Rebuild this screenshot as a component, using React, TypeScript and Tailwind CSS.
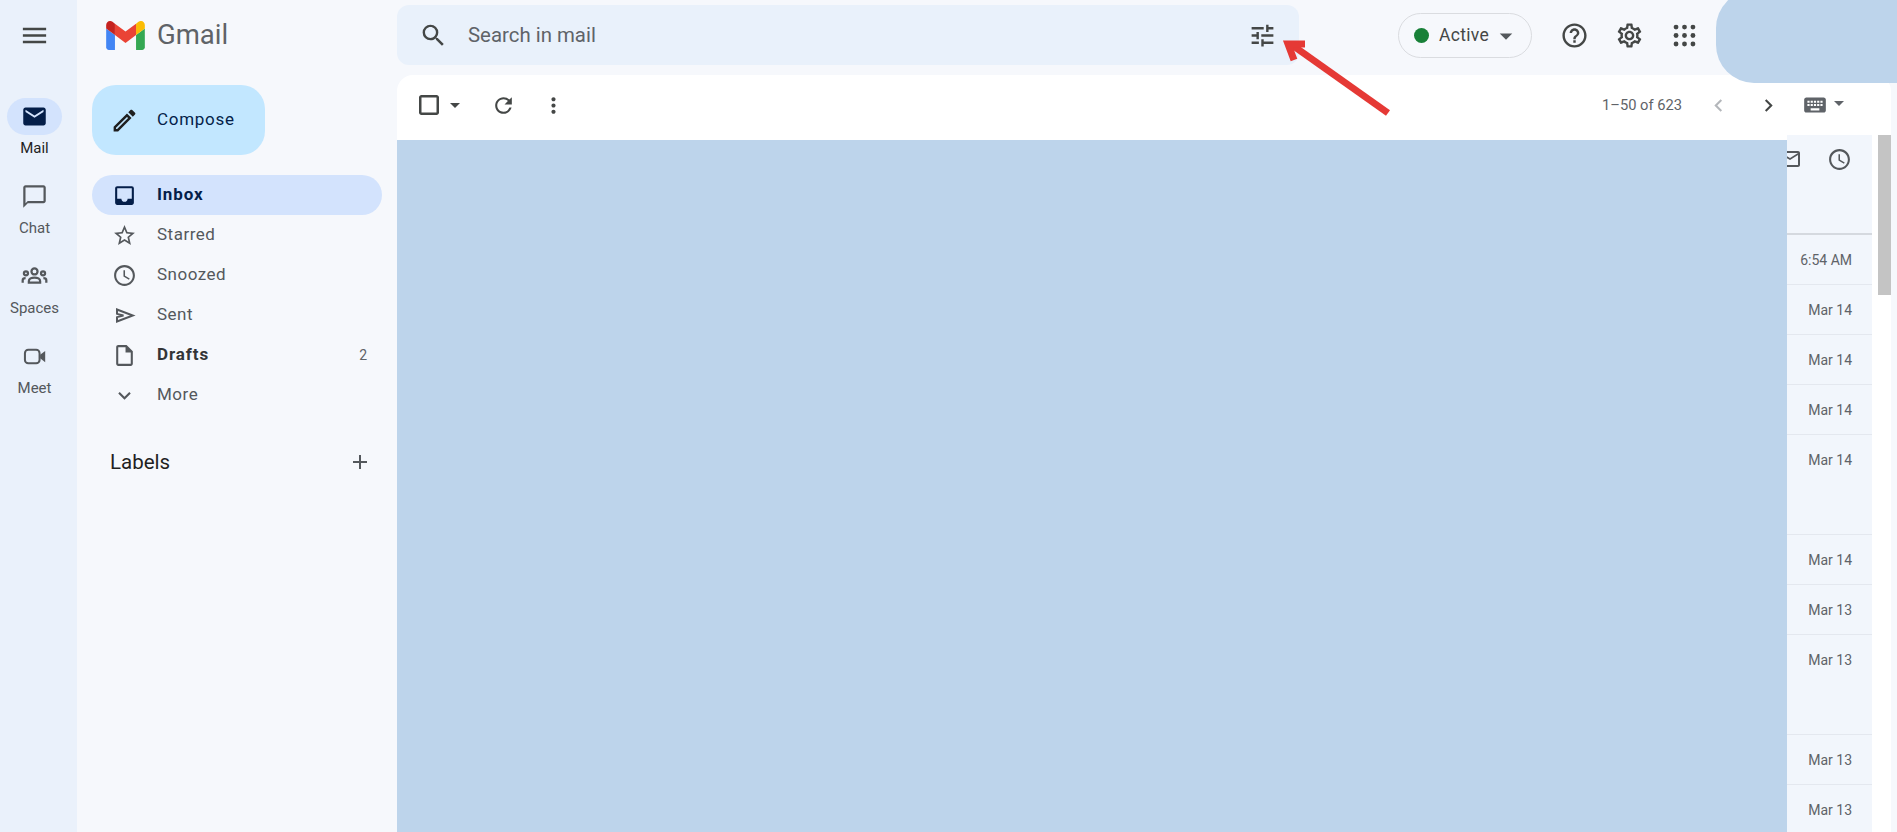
import type { ComponentType, ReactNode } from "react";
import {
  MdAccessTime,
  MdAdd,
  MdArrowDropDown,
  MdChatBubbleOutline,
  MdChevronLeft,
  MdChevronRight,
  MdCropSquare,
  MdExpandMore,
  MdInbox,
  MdKeyboard,
  MdMail,
  MdMenu,
  MdMoreVert,
  MdOutlineEdit,
  MdOutlineHelpOutline,
  MdOutlineInsertDriveFile,
  MdOutlineMailOutline,
  MdOutlineSettings,
  MdOutlineStarBorder,
  MdRefresh,
  MdSearch,
  MdTune,
} from "react-icons/md";

type Icon = ComponentType<{ className?: string }>;

function SpacesIcon({ className }: { className?: string }) {
  return (
    <svg viewBox="0 0 24 24" className={className} fill="none" stroke="currentColor" strokeWidth="2">
      <circle cx="12" cy="7.5" r="2.7" />
      <circle cx="4.4" cy="9.2" r="1.8" />
      <circle cx="19.6" cy="9.2" r="1.8" />
      <path d="M7 17.5v-1.6c0-1.7 2.2-3 5-3s5 1.3 5 3v1.6z" />
      <path d="M1.5 17.5v-2.2c0-1 1-1.8 2.6-1.8M22.5 17.5v-2.2c0-1-1-1.8-2.6-1.8" />
    </svg>
  );
}

function MeetIcon({ className }: { className?: string }) {
  return (
    <svg viewBox="0 0 24 24" className={className}>
      <rect x="3.5" y="6" width="13" height="12" rx="3" fill="none" stroke="currentColor" strokeWidth="1.8" />
      <path d="M17 10.5 21.5 7v10L17 13.5z" fill="currentColor" />
    </svg>
  );
}

function SentIcon({ className }: { className?: string }) {
  return (
    <svg viewBox="0 0 24 24" className={className} fill="none" stroke="currentColor" strokeWidth="1.9">
      <path d="M4.8 6.2 20 12 4.8 17.8v-4.2L11 12l-6.2-1.6z" />
    </svg>
  );
}

const railItems: { label: string; icon: Icon; active?: boolean }[] = [
  { label: "Mail", icon: MdMail, active: true },
  { label: "Chat", icon: MdChatBubbleOutline },
  { label: "Spaces", icon: SpacesIcon },
  { label: "Meet", icon: MeetIcon },
];

const navItems: { label: string; icon: Icon; active?: boolean; bold?: boolean; count?: string }[] = [
  { label: "Inbox", icon: MdInbox, active: true, bold: true },
  { label: "Starred", icon: MdOutlineStarBorder },
  { label: "Snoozed", icon: MdAccessTime },
  { label: "Sent", icon: SentIcon },
  { label: "Drafts", icon: MdOutlineInsertDriveFile, bold: true, count: "2" },
  { label: "More", icon: MdExpandMore },
];

// row heights follow the mail list behind the redaction: some rows carry a chip line
const dates: { text: string; tall?: boolean }[] = [
  { text: "6:54 AM" },
  { text: "Mar 14" },
  { text: "Mar 14" },
  { text: "Mar 14" },
  { text: "Mar 14", tall: true },
  { text: "Mar 14" },
  { text: "Mar 13" },
  { text: "Mar 13", tall: true },
  { text: "Mar 13" },
  { text: "Mar 13" },
];

function GmailLogo() {
  return (
    <svg viewBox="52 42 88 66" className="h-[29px] w-[39px]">
      <path fill="#4285f4" d="M58 108h14V74L52 59v43c0 3.32 2.69 6 6 6" />
      <path fill="#34a853" d="M120 108h14c3.32 0 6-2.69 6-6V59l-20 15" />
      <path fill="#fbbc04" d="M120 48v26l20-15v-8c0-7.42-8.47-11.65-14.4-7.2" />
      <path fill="#ea4335" d="M72 74V48l24 18 24-18v26L96 92" />
      <path fill="#c5221f" d="M52 51v8l20 15V48l-5.6-4.2c-5.94-4.45-14.4-.22-14.4 7.2" />
    </svg>
  );
}

function AppsDots() {
  const spots = [5, 12, 19];
  return (
    <svg viewBox="0 0 24 24" className="h-[29px] w-[29px] fill-[#444746]">
      {spots.map((y) => spots.map((x) => <circle key={`${x}-${y}`} cx={x} cy={y} r="2" />))}
    </svg>
  );
}

function IconSlot({ className, children }: { className: string; children: ReactNode }) {
  return <div className={`flex shrink-0 items-center justify-center ${className}`}>{children}</div>;
}

function Rail() {
  return (
    <aside className="flex w-[77px] shrink-0 flex-col items-center bg-[#eaf1fb] pr-[8px]">
      <IconSlot className="mt-[15px] h-10 w-10">
        <MdMenu className="h-[31px] w-[31px] text-[#444746]" />
      </IconSlot>
      <div className="mt-[43px] flex flex-col">
        {railItems.map(({ label, icon: RailIcon, active }) => (
          <div key={label} className="flex h-20 flex-col items-center">
            <div className={`flex h-[37px] w-[55px] items-center justify-center rounded-full ${active ? "bg-[#d3e3fd]" : ""}`}>
              <RailIcon className={`h-[27px] w-[27px] ${active ? "text-[#041e49]" : "text-[#54585c]"}`} />
            </div>
            <span className={`mt-[3px] text-[15px] leading-5 ${active ? "text-[#1f1f1f]" : "text-[#54585c]"}`}>{label}</span>
          </div>
        ))}
      </div>
    </aside>
  );
}

function Sidebar() {
  return (
    <nav className="flex w-[320px] shrink-0 flex-col">
      <div className="flex h-[70px] items-center pl-[29px]">
        <GmailLogo />
        <span className="ml-[12px] text-[27.5px] leading-none text-[#5f6368]">Gmail</span>
      </div>
      <div className="mt-[15px] ml-[15px] flex h-[70px] w-[173px] items-center rounded-[24px] bg-[#c2e7ff] pl-[18px]">
        <MdOutlineEdit className="h-[29px] w-[29px] text-[#1f1f1f]" />
        <span className="ml-[18px] text-[17px] tracking-[0.7px] text-[#041e49]">Compose</span>
      </div>
      <ul className="mt-5 ml-[15px] w-[290px]">
        {navItems.map(({ label, icon: NavIcon, active, bold, count }) => (
          <li
            key={label}
            className={`flex h-10 items-center rounded-full pl-[20px] pr-[15px] ${active ? "bg-[#d3e3fd] text-[#041e49]" : "text-[#54585c]"}`}
          >
            <NavIcon className={`h-[25px] w-[25px] ${active ? "text-[#041e49]" : "text-[#54585c]"}`} />
            <span className={`ml-[20px] flex-1 text-[17px] ${bold ? "font-bold tracking-[0.9px]" : "tracking-[0.5px]"} ${bold && !active ? "text-[#333537]" : ""}`}>{label}</span>
            {count && <span className="text-[14px] text-[#5f6368]">{count}</span>}
          </li>
        ))}
      </ul>
      <div className="mt-[32px] ml-[33px] flex w-[262px] items-center justify-between">
        <span className="text-[20.5px] text-[#1f1f1f]">Labels</span>
        <MdAdd className="h-[24px] w-[24px] text-[#54585c]" />
      </div>
    </nav>
  );
}

function TopBar() {
  return (
    <header className="flex h-[75px] shrink-0 items-start">
      <div className="mt-[5px] flex h-[60px] w-[902px] items-center rounded-[12px] bg-[#e9f1fb] pl-[22px] pr-[22px]">
        <MdSearch className="h-[29px] w-[29px] text-[#444746]" />
        <span className="ml-[20px] flex-1 text-[20.4px] text-[#5f6368]">Search in mail</span>
        <MdTune className="h-[29px] w-[29px] text-[#444746]" />
      </div>
      <div className="mt-[13px] ml-[99px] flex h-[45px] w-[134px] items-center rounded-full border border-[#dadce0] pl-[15px]">
        <span className="h-[15px] w-[15px] rounded-full bg-[#188038]" />
        <span className="ml-[10px] text-[17.5px] tracking-[0.3px] text-[#444746]">Active</span>
        <MdArrowDropDown className="ml-[2px] h-[30px] w-[30px] text-[#54585c]" />
      </div>
      <div className="mt-[21px] ml-[28px] flex items-center gap-[26px]">
        <MdOutlineHelpOutline className="h-[29px] w-[29px] text-[#444746]" />
        <MdOutlineSettings className="h-[29px] w-[29px] text-[#444746]" />
        <AppsDots />
      </div>
    </header>
  );
}

function Toolbar() {
  return (
    <div className="flex h-[60px] shrink-0 items-center pl-[17px] pr-[40px]">
      <MdCropSquare className="h-[30px] w-[30px] text-[#444746]" />
      <MdArrowDropDown className="ml-[-1px] h-[24px] w-[24px] text-[#444746]" />
      <MdRefresh className="ml-[24px] h-[25px] w-[25px] text-[#444746]" />
      <MdMoreVert className="ml-[25px] h-[25px] w-[25px] text-[#444746]" />
      <span className="ml-auto text-[14.7px] text-[#5f6368]">1–50 of 623</span>
      <MdChevronLeft className="ml-[24px] h-[25px] w-[25px] text-[#b4b7bb]" />
      <MdChevronRight className="ml-[25px] h-[25px] w-[25px] text-[#444746]" />
      <MdKeyboard className="ml-[21px] h-[26px] w-[26px] text-[#5f6368]" />
      <MdArrowDropDown className="ml-[-1px] mb-[5px] h-[24px] w-[24px] text-[#5f6368]" />
    </div>
  );
}

function DateColumn() {
  return (
    <div className="w-[85px] shrink-0 overflow-hidden bg-[#f2f6fc]">
      <div className="flex h-[100px] items-start justify-end border-b-2 border-[#d5d9df] pr-[20px] pt-[12px]">
        <MdOutlineMailOutline className="mr-[25px] h-[24px] w-[24px] shrink-0 text-[#54585c]" />
        <MdAccessTime className="h-[25px] w-[25px] shrink-0 text-[#54585c]" />
      </div>
      {dates.map(({ text, tall }, i) => (
        <div
          key={i}
          className={`border-b border-[#e4e8ef] pr-[20px] pt-[15px] text-right text-[14px] leading-5 text-[#5f6368] ${tall ? "h-[100px]" : "h-[50px]"}`}
        >
          {text}
        </div>
      ))}
    </div>
  );
}

function Arrow() {
  return (
    <svg className="pointer-events-none absolute left-[1270px] top-[30px] h-[95px] w-[130px]" viewBox="0 0 130 95" fill="none">
      <path d="M118 83L22 15" stroke="#e53935" strokeWidth="7" />
      <path d="M35 14L18 14L24 30" stroke="#e53935" strokeWidth="7" strokeLinejoin="miter" />
    </svg>
  );
}

export default function App() {
  return (
    <div className="relative flex h-screen overflow-hidden bg-[#f6f8fc] font-['Roboto',sans-serif]">
      <Rail />
      <Sidebar />
      <main className="flex min-w-0 flex-1 flex-col pr-[6px]">
        <TopBar />
        <section className="flex min-h-0 flex-1 flex-col overflow-hidden rounded-t-[16px] bg-white">
          <Toolbar />
          <div className="flex min-h-0 flex-1">
            <div className="mt-[5px] flex-1 bg-[#bdd4eb]" />
            <DateColumn />
            <div className="ml-[6px] w-[13px] shrink-0">
              <div className="h-[160px] bg-[#c4c4c4]" />
            </div>
          </div>
        </section>
      </main>
      {/* redacted account area, sits over the top bar */}
      <div className="absolute left-[1716px] top-[-10px] h-[93px] w-[200px] rounded-l-[38px] bg-[#bdd4eb]" />
      <Arrow />
    </div>
  );
}
